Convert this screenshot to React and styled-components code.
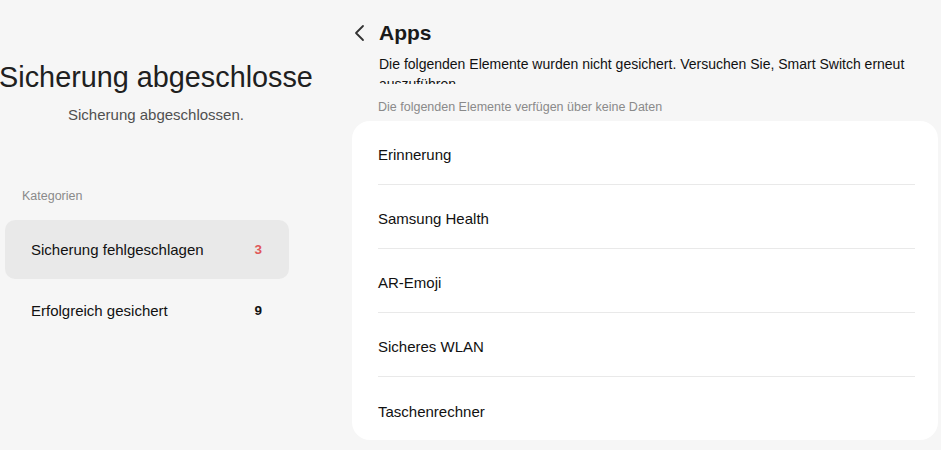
import styled, { createGlobalStyle } from "styled-components"

const Global = createGlobalStyle`
  html, body {
    margin: 0;
    background: #f6f6f6;
    font-family: "Liberation Sans", Arial, sans-serif;
    color: #1a1a1a;
  }
  * { box-sizing: border-box; }
`

const Page = styled.div`
  display: flex;
  width: 941px;
  height: 450px;
  overflow: hidden;
`

const Side = styled.aside`
  width: 352px;
  flex-shrink: 0;
  display: flex;
  flex-direction: column;
  padding: 59px 0 0 0;
`

const Hero = styled.div`
  width: 312px;
  display: flex;
  flex-direction: column;
  align-items: center;
`

const Title = styled.h1`
  margin: 0;
  font-size: 28.8px;
  font-weight: 400;
  white-space: nowrap;
  line-height: 36px;
  color: #202020;
`

const Subtitle = styled.p`
  margin: 10px 0 0;
  font-size: 15px;
  line-height: 20px;
  color: #505050;
`

const Label = styled.div`
  margin: 63px 0 0 22px;
  font-size: 12.5px;
  color: #8a8a8a;
  line-height: 16px;
`

const Menu = styled.div`
  margin: 16px 0 0 5px;
  width: 284px;
  display: flex;
  flex-direction: column;
  gap: 2px;
`

const MenuItem = styled.div`
  height: 59px;
  border-radius: 10px;
  background: ${p => (p.$active ? "#e9e9e9" : "transparent")};
  display: flex;
  align-items: center;
  justify-content: space-between;
  padding: 0 27px 0 26px;
  font-size: 15px;
  color: #111;
`

const Count = styled.span`
  font-size: 13.5px;
  font-weight: 700;
  color: ${p => (p.$alert ? "#e0585a" : "#111")};
`

const Main = styled.main`
  flex: 1;
  display: flex;
  flex-direction: column;
  padding: 20px 3px 0 0;
`

const Header = styled.div`
  display: flex;
  align-items: center;
  gap: 12px;
  height: 26px;
`

const Back = styled.svg`
  width: 14px;
  height: 18px;
  margin-left: 1px;
`

const Heading = styled.h2`
  margin: 0;
  font-size: 21px;
  font-weight: 600;
  color: #1a1a1a;
`

const Desc = styled.p`
  margin: 8px 0 0 27px;
  font-size: 14px;
  line-height: 20px;
  height: 30px;
  overflow: hidden;
  color: #111;
`

const Note = styled.div`
  margin: 15px 0 0 26px;
  font-size: 12.5px;
  color: #8a8a8a;
  line-height: 16px;
`

const Card = styled.div`
  margin-top: 6px;
  background: #fff;
  border-radius: 18px;
  padding: 0 23px 0 26px;
  height: 319px;
`

const Row = styled.div`
  height: 64px;
  padding-top: 4px;
  display: flex;
  align-items: center;
  font-size: 15px;
  color: #111;
  border-bottom: ${p => (p.$last ? "none" : "1.5px solid #e9e9e9")};
`

const apps = ["Erinnerung", "Samsung Health", "AR-Emoji", "Sicheres WLAN", "Taschenrechner"]

export default function App() {
  return (
    <>
      <Global />
      <Page>
        <Side>
          <Hero>
            <Title>Sicherung abgeschlosse</Title>
            <Subtitle>Sicherung abgeschlossen.</Subtitle>
          </Hero>
          <Label>Kategorien</Label>
          <Menu>
            <MenuItem $active>
              Sicherung fehlgeschlagen
              <Count $alert>3</Count>
            </MenuItem>
            <MenuItem>
              Erfolgreich gesichert
              <Count>9</Count>
            </MenuItem>
          </Menu>
        </Side>
        <Main>
          <Header>
            <Back viewBox="0 0 14 18" fill="none">
              <path d="M10 2 L3 9 L10 16" stroke="#333" strokeWidth="1.8" strokeLinecap="round" strokeLinejoin="round" />
            </Back>
            <Heading>Apps</Heading>
          </Header>
          <Desc>
            Die folgenden Elemente wurden nicht gesichert. Versuchen Sie, Smart Switch erneut auszuführen.
          </Desc>
          <Note>Die folgenden Elemente verfügen über keine Daten</Note>
          <Card>
            {apps.map((name, i) => (
              <Row key={name} $last={i === apps.length - 1}>{name}</Row>
            ))}
          </Card>
        </Main>
      </Page>
    </>
  )
}
